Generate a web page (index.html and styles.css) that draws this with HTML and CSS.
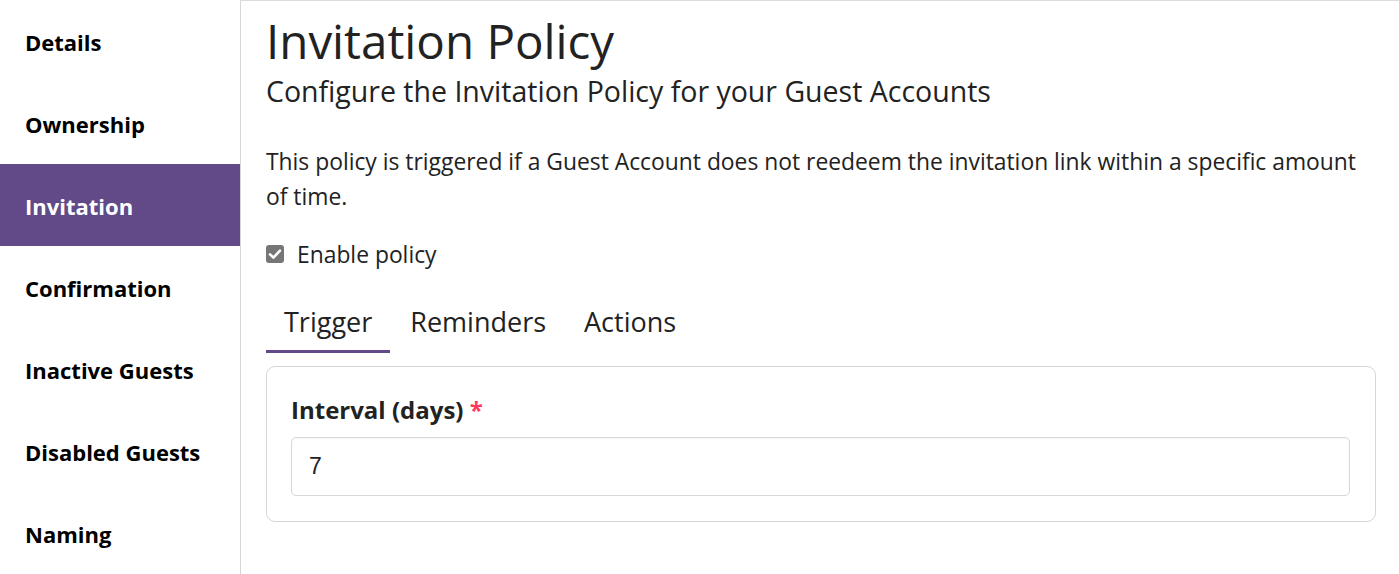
FILE: index.html
```html
<!DOCTYPE html>
<html lang="en">
<head>
<meta charset="utf-8">
<title>Invitation Policy</title>
<link rel="stylesheet" href="styles.css">
</head>
<body>
<div class="layout">
  <nav class="sidebar">
    <a class="nav-item">Details</a>
    <a class="nav-item">Ownership</a>
    <a class="nav-item active">Invitation</a>
    <a class="nav-item">Confirmation</a>
    <a class="nav-item">Inactive Guests</a>
    <a class="nav-item">Disabled Guests</a>
    <a class="nav-item">Naming</a>
  </nav>
  <main class="main">
    <h1 class="title">Invitation Policy</h1>
    <h2 class="subtitle">Configure the Invitation Policy for your Guest Accounts</h2>
    <p class="desc">This policy is triggered if a Guest Account does not reedeem the invitation link within a specific amount of time.</p>
    <label class="check">
      <span class="box"><svg viewBox="0 0 18 18" width="18" height="18"><rect x="0" y="0" width="18" height="18" rx="3" fill="#767676"/><path d="M4 9.4 L7.4 12.6 L14 5.6" fill="none" stroke="#fff" stroke-width="2.6" stroke-linecap="round" stroke-linejoin="round"/></svg></span>
      <span class="check-label">Enable policy</span>
    </label>
    <div class="tabs">
      <div class="tab active">Trigger</div>
      <div class="tab">Reminders</div>
      <div class="tab">Actions</div>
    </div>
    <div class="card">
      <div class="field-label">Interval (days) <span class="req">*</span></div>
      <div class="input">7</div>
    </div>
  </main>
</div>
</body>
</html>
```
FILE: styles.css
```css
html, body {
  margin: 0;
  padding: 0;
  background: #fff;
}
body {
  font-family: "Open Sans", "Noto Sans", sans-serif;
  color: #222;
  width: 1399px;
  height: 574px;
  overflow: hidden;
}
.layout {
  display: flex;
  height: 574px;
}
.sidebar {
  width: 240px;
  flex: none;
  display: flex;
  flex-direction: column;
}
.nav-item {
  height: 82px;
  box-sizing: border-box;
  padding-top: 2px;
  display: flex;
  align-items: center;
  padding-left: 25px;
  font-weight: 700;
  font-size: 22px;
  color: #000;
}
.nav-item.active {
  background: #614a87;
  color: #fff;
}
.main {
  flex: 1;
  border-left: 1px solid #d6d6d6;
  border-top: 1px solid #dcdcdc;
  padding: 0 23px 0 25px;
}
.title {
  margin: 8px 0 0;
  font-size: 47.5px;
  font-weight: 400;
  line-height: 64px;
}
.subtitle {
  margin: 0;
  font-size: 28.5px;
  font-weight: 400;
  line-height: 36px;
}
.desc {
  margin: 35px 0 0;
  font-size: 22.85px;
  line-height: 35px;
}
.check {
  display: flex;
  align-items: center;
  margin-top: 22px;
  height: 36px;
}
.box {
  width: 18px;
  height: 18px;
  display: flex;
}
.check-label {
  margin-left: 13px;
  font-size: 22.85px;
}
.tabs {
  display: flex;
  margin-top: 28px;
}
.tab {
  font-size: 27px;
  padding: 0 18px 6px;
  line-height: 44px;
  border-bottom: 3px solid transparent;
  margin-right: 2px;
}
.tab.active {
  border-bottom-color: #614a87;
}
.card {
  margin-top: 13px;
  border: 1px solid #d6d6d6;
  border-radius: 9px;
  padding: 26px 25px 25px 24px;
}
.field-label {
  font-size: 24px;
  font-weight: 700;
  line-height: 34px;
  margin-bottom: 10px;
}
.req {
  color: #ff3860;
}
.input {
  height: 59px;
  box-sizing: border-box;
  border: 1px solid #d8d8d8;
  border-radius: 5px;
  box-shadow: inset 0 1px 2px rgba(0,0,0,0.04);
  padding-left: 17px;
  display: flex;
  align-items: center;
  font-family: "Liberation Sans", Arial, sans-serif;
  font-size: 23px;
  color: #222;
}
```
